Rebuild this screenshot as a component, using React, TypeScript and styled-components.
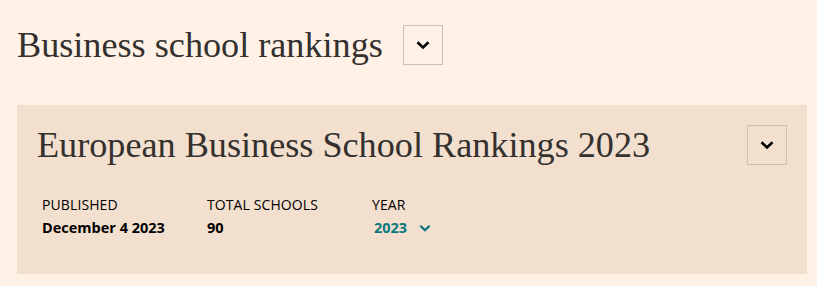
import React from "react";
import styled, { createGlobalStyle } from "styled-components";

const Global = createGlobalStyle`
  html, body { margin: 0; padding: 0; background: #fff1e5; }
  body { font-family: "Open Sans", sans-serif; color: #33302e; }
`;

const Page = styled.div`
  padding: 25px 10px 0 17px;
`;

const TitleRow = styled.div`
  display: flex;
  align-items: center;
  gap: 20px;
  height: 40px;
`;

const PageTitle = styled.h1`
  margin: 0;
  font-family: "Liberation Serif", serif;
  font-weight: 400;
  font-size: 36.2px;
  line-height: 40px;
  color: #33302e;
`;

const ToggleButton = styled.button`
  width: 40px;
  height: 40px;
  padding: 0;
  display: flex;
  align-items: center;
  justify-content: center;
  background: transparent;
  border: 1px solid #ccc1b7;
  color: #000;
  flex-shrink: 0;
`;

const Panel = styled.section`
  margin-top: 40px;
  background: #f2dfce;
  width: 790px;
  height: 169px;
  box-sizing: border-box;
  padding: 20px 20px 0 20px;
`;

const PanelHead = styled.div`
  display: flex;
  justify-content: space-between;
  align-items: flex-start;
`;

const PanelTitle = styled.h2`
  margin: 0;
  font-family: "Liberation Serif", serif;
  font-weight: 400;
  font-size: 36.2px;
  line-height: 40px;
  color: #33302e;
`;

const Stats = styled.div`
  display: flex;
  margin-top: 31px;
  padding-left: 5px;
`;

const Stat = styled.div`
  width: 165px;
  display: flex;
  flex-direction: column;
`;

const Label = styled.span`
  font-size: 14px;
  line-height: 18px;
  text-transform: uppercase;
  color: #000;
  letter-spacing: 0.1px;
`;

const Value = styled.span<{ $accent?: boolean }>`
  margin-top: 5px;
  font-size: 14.5px;
  line-height: 18px;
  font-weight: 700;
  color: ${(p) => (p.$accent ? "#0d7680" : "#000")};
  display: flex;
  align-items: center;
  gap: 12px;
  padding-left: ${(p) => (p.$accent ? "2px" : "0")};
`;

const Chevron = ({ size = 14, stroke = "#000", sw = 2.6 }: { size?: number; stroke?: string; sw?: number }) => (
  <svg width={size} height={size} viewBox="0 0 14 14" fill="none">
    <path d="M1.5 4.3 L7 9.5 L12.5 4.3" stroke={stroke} strokeWidth={sw} strokeLinecap="butt" strokeLinejoin="miter" />
  </svg>
);

export default function App() {
  return (
    <Page>
      <Global />
      <TitleRow>
        <PageTitle>Business school rankings</PageTitle>
        <ToggleButton aria-label="Toggle"><Chevron /></ToggleButton>
      </TitleRow>
      <Panel>
        <PanelHead>
          <PanelTitle>European Business School Rankings 2023</PanelTitle>
          <ToggleButton aria-label="Toggle"><Chevron /></ToggleButton>
        </PanelHead>
        <Stats>
          <Stat>
            <Label>Published</Label>
            <Value>December 4 2023</Value>
          </Stat>
          <Stat>
            <Label>Total schools</Label>
            <Value>90</Value>
          </Stat>
          <Stat>
            <Label>Year</Label>
            <Value $accent>
              2023
              <Chevron size={12} stroke="#0d7680" sw={2.6} />
            </Value>
          </Stat>
        </Stats>
      </Panel>
    </Page>
  );
}
